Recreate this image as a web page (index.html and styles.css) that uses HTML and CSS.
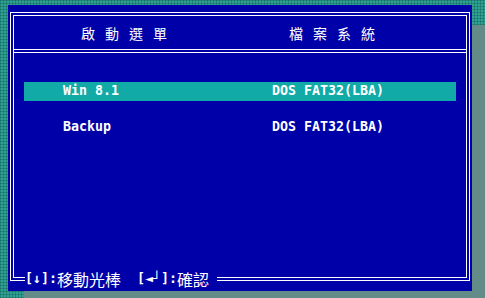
FILE: index.html
```html
<!DOCTYPE html>
<html lang="zh-Hant">
<head>
<meta charset="utf-8">
<title>啟動選單</title>
<link rel="stylesheet" href="styles.css">
</head>
<body>
<div class="screen">
  <div class="frame-outer">
    <div class="frame-inner">
      <div class="head">
        <span class="h-col1">啟動選單</span>
        <span class="h-col2">檔案系統</span>
      </div>
      <div class="sep"></div>
      <ul class="menu">
        <li class="item selected"><span class="col1">Win 8.1</span><span class="col2">DOS FAT32(LBA)</span></li>
        <li class="item"><span class="col1">Backup</span><span class="col2">DOS FAT32(LBA)</span></li>
      </ul>
    </div>
  </div>
  <div class="footer"><span class="mono">[↓]:</span><span class="cjk">移動光棒</span><span class="mono">  [◄┘]:</span><span class="cjk">確認</span><span class="mono"> </span></div>
</div>
</body>
</html>
```
FILE: styles.css
```css
html, body {
  margin: 0;
  padding: 0;
}
body {
  width: 485px;
  height: 298px;
  overflow: hidden;
  background-color: #2ea292;
  background-image:
    linear-gradient(90deg, rgba(0, 40, 40, 0.22) 1px, transparent 1px),
    linear-gradient(rgba(0, 40, 40, 0.22) 1px, transparent 1px);
  background-size: 3px 3px;
}
.screen {
  position: relative;
  box-sizing: border-box;
  width: 464px;
  height: 286px;
  margin: 5px 0 0 8px;
  padding: 7px 2px 10px 2px;
  background: #0000a8;
  box-shadow: 16px 20px 0 #638c88;
  color: #ffffff;
}
.frame-outer {
  box-sizing: border-box;
  height: 100%;
  border: 1px solid #ffffff;
  padding: 2px;
}
.frame-inner {
  box-sizing: border-box;
  height: 100%;
  border: 1px solid #ffffff;
  display: flex;
  flex-direction: column;
}
.head {
  height: 33px;
  display: flex;
  align-items: center;
  padding-left: 67px;
  font-family: "Noto Sans CJK TC", "Noto Sans CJK SC", sans-serif;
  font-size: 14px;
  letter-spacing: 10px;
  line-height: 16px;
}
.h-col1 {
  flex: none;
  width: 208px;
}
.h-col2 {
  flex: none;
}
.sep {
  height: 2px;
  border-top: 1px solid #ffffff;
  border-bottom: 1px solid #ffffff;
}
.menu {
  list-style: none;
  margin: 0;
  padding: 29px 10px 0 10px;
  display: flex;
  flex-direction: column;
  gap: 17px;
  font-family: "DejaVu Sans Mono", "Liberation Mono", monospace;
  font-weight: bold;
  font-size: 13.3px;
}
.item {
  height: 19px;
  line-height: 18px;
  display: flex;
  white-space: pre;
}
.item.selected {
  background: #12aaa6;
}
.col1 {
  flex: none;
  box-sizing: border-box;
  width: 248px;
  padding-left: 39px;
}
.col2 {
  flex: none;
}
.footer {
  position: absolute;
  left: 17px;
  top: 266px;
  height: 16px;
  line-height: 16px;
  background: #0000a8;
  white-space: pre;
  display: flex;
  align-items: center;
}
.mono {
  font-family: "DejaVu Sans Mono", "Liberation Mono", monospace;
  font-size: 13.3px;
  font-weight: bold;
}
.cjk {
  font-family: "Noto Sans CJK TC", "Noto Sans CJK SC", sans-serif;
  font-size: 16px;
}
```
